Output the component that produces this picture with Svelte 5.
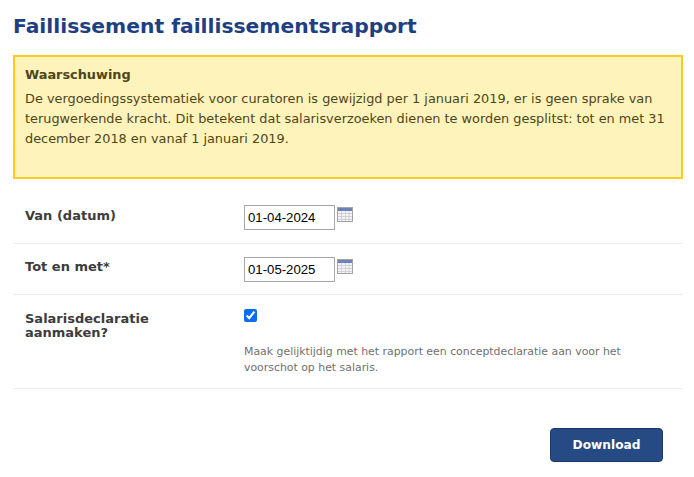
<script lang="ts">
let vanDatum = '01-04-2024';
let totDatum = '01-05-2025';
let declaratie = true;
</script>

<div class="page">
	<h1 class="title">Faillissement faillissementsrapport</h1>

	<div class="warning">
		<strong class="warning-title">Waarschuwing</strong>
		<p class="warning-text">De vergoedingssystematiek voor curatoren is gewijzigd per 1 januari 2019, er is geen sprake van terugwerkende kracht. Dit betekent dat salarisverzoeken dienen te worden gesplitst: tot en met 31 december 2018 en vanaf 1 januari 2019.</p>
	</div>

	<form class="form" on:submit|preventDefault>
		<div class="row row-van">
			<label class="label" for="van">Van (datum)</label>
			<div class="field">
				<input id="van" class="date" type="text" bind:value={vanDatum}>
				<svg class="cal" width="16" height="15" viewBox="0 0 16 15" aria-hidden="true">
					<rect x="0.5" y="0.5" width="15" height="14" fill="#f4f4f6" stroke="#a3a3a8"/>
					<rect x="1" y="1" width="14" height="3" fill="#6d83b8"/>
					<path d="M1 6.5h14M1 9.5h14M1 12.5h14M4.5 4v10M8.5 4v10M12 4v10" stroke="#d2d2d6" fill="none"/>
				</svg>
			</div>
		</div>
		<div class="row row-tot">
			<label class="label" for="tot">Tot en met*</label>
			<div class="field">
				<input id="tot" class="date" type="text" bind:value={totDatum}>
				<svg class="cal" width="16" height="15" viewBox="0 0 16 15" aria-hidden="true">
					<rect x="0.5" y="0.5" width="15" height="14" fill="#f4f4f6" stroke="#a3a3a8"/>
					<rect x="1" y="1" width="14" height="3" fill="#6d83b8"/>
					<path d="M1 6.5h14M1 9.5h14M1 12.5h14M4.5 4v10M8.5 4v10M12 4v10" stroke="#d2d2d6" fill="none"/>
				</svg>
			</div>
		</div>
		<div class="row row-check">
			<label class="label" for="decl">Salarisdeclaratie aanmaken?</label>
			<div class="check-col">
				<input id="decl" class="check" type="checkbox" bind:checked={declaratie}>
				<p class="hint">Maak gelijktijdig met het rapport een conceptdeclaratie aan voor het voorschot op het salaris.</p>
			</div>
		</div>
		<div class="actions">
			<button class="download" type="submit">Download</button>
		</div>
	</form>
</div>

<style>
:global(body) {
	margin: 0;
	background: #fff;
}

.page {
	padding: 14px 11px 0 13px;
	font-family: "DejaVu Sans", Verdana, sans-serif;
}

.title {
	margin: 0 0 17px;
	font-size: 20.3px;
	line-height: 24px;
	font-weight: 700;
	color: #1e3f82;
}

.warning {
	box-sizing: border-box;
	height: 124px;
	padding: 9px 10px;
	background: #fef4bb;
	border: 2px solid #fbcd22;
	color: #4f4519;
	font-size: 12.87px;
}

.warning-title {
	display: block;
	line-height: 17px;
}

.warning-text {
	margin: 6px 0 0;
	line-height: 19.8px;
}

.form {
	margin: 0;
}

.row {
	display: grid;
	grid-template-columns: 231px 1fr;
	box-sizing: border-box;
	border-bottom: 1px solid #ececec;
}

.row-van {
	height: 65px;
	padding-top: 26px;
}

.row-tot {
	height: 51px;
	padding-top: 13px;
}

.row-check {
	height: 94px;
	padding-top: 14px;
}

.label {
	box-sizing: border-box;
	max-width: 180px;
	padding-left: 12px;
	font-size: 13px;
	line-height: 14px;
	font-weight: 700;
	color: #3c3c3c;
}

.row-van .label {
	margin-top: 4px;
}

.row-tot .label {
	margin-top: 3px;
}

.row-check .label {
	margin-top: 3px;
}

.field {
	display: flex;
	align-items: flex-start;
}

.date {
	box-sizing: border-box;
	width: 91px;
	height: 25px;
	margin: 0 2px 0 0;
	padding: 1px 3px;
	border: 1px solid #a6a6a6;
	border-radius: 0;
	font-family: "Liberation Sans", Arial, sans-serif;
	font-size: 13.2px;
	color: #000;
	background: #fff;
}

.cal {
	display: block;
	margin-top: 2px;
}

.check-col {
	display: flex;
	flex-direction: column;
	align-items: flex-start;
}

.check {
	width: 13px;
	height: 13px;
	margin: 0;
	accent-color: #0a6cf5;
}

.hint {
	margin: 22px 0 0;
	font-size: 10.9px;
	line-height: 16px;
	color: #6f6f6f;
	max-width: 400px;
}

.actions {
	display: flex;
	justify-content: flex-end;
	padding: 39px 20px 0 0;
}

.download {
	width: 113px;
	height: 34px;
	padding: 0;
	background: #254a84;
	border: 1px solid #1b3a6c;
	border-radius: 4px;
	color: #fff;
	font-family: inherit;
	font-size: 12.2px;
	font-weight: 700;
}
</style>
